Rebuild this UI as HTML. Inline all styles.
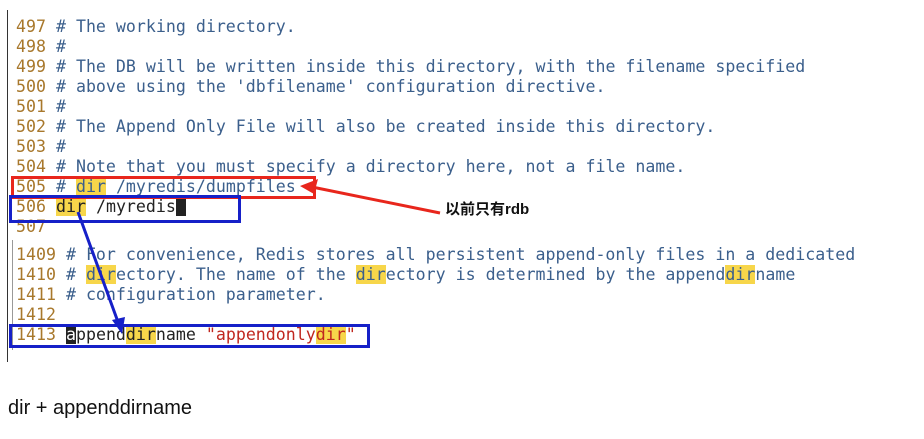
<!DOCTYPE html>
<html><head><meta charset="utf-8"><style>
body{margin:0;width:924px;height:439px;background:#fff;position:relative;overflow:hidden}
.l{position:absolute;left:16px;font-family:"DejaVu Sans Mono","Liberation Mono",monospace;font-size:16.6px;line-height:20px;white-space:pre;color:#3b5f8c}
.n{color:#a8782c}
.k{color:#222}
.s{color:#c0271f}
.h{background:#f7d64a}
.cur{background:#222;color:#fff}
.box{position:absolute;border:3px solid}
</style></head><body>
<div style="position:absolute;left:7px;top:10px;width:1px;height:352px;background:#333"></div>
<div style="position:absolute;left:12px;top:240px;width:1px;height:110px;background:#999"></div>
<div class="l" style="top:17px"><span class="n">497</span> # The working directory.</div>
<div class="l" style="top:37px"><span class="n">498</span> #</div>
<div class="l" style="top:57px"><span class="n">499</span> # The DB will be written inside this directory, with the filename specified</div>
<div class="l" style="top:77px"><span class="n">500</span> # above using the 'dbfilename' configuration directive.</div>
<div class="l" style="top:97px"><span class="n">501</span> #</div>
<div class="l" style="top:117px"><span class="n">502</span> # The Append Only File will also be created inside this directory.</div>
<div class="l" style="top:137px"><span class="n">503</span> #</div>
<div class="l" style="top:157px"><span class="n">504</span> # Note that you must specify a directory here, not a file name.</div>
<div class="l" style="top:177px"><span class="n">505</span> # <span class="h">dir</span> /myredis/dumpfiles</div>
<div class="l k" style="top:197px"><span class="n">506</span> <span class="h">dir</span> /myredis<span class="cur"> </span></div>
<div class="l" style="top:217px"><span class="n">507</span></div>
<div class="l" style="top:245px"><span class="n">1409</span> # For convenience, Redis stores all persistent append-only files in a dedicated</div>
<div class="l" style="top:265px"><span class="n">1410</span> # <span class="h">dir</span>ectory. The name of the <span class="h">dir</span>ectory is determined by the append<span class="h">dir</span>name</div>
<div class="l" style="top:285px"><span class="n">1411</span> # configuration parameter.</div>
<div class="l" style="top:305px"><span class="n">1412</span></div>
<div class="l k" style="top:325px"><span class="n">1413</span> <span class="cur">a</span>ppend<span class="h">dir</span>name <span class="s">"appendonly<span class="h">dir</span>"</span></div>
<div class="box" style="left:11px;top:176px;width:299px;height:17px;border-color:#e8261c"></div>
<div class="box" style="left:9px;top:195px;width:226px;height:22px;border-color:#1620c8"></div>
<div class="box" style="left:9px;top:324px;width:355px;height:18px;border-color:#1620c8"></div>
<svg style="position:absolute;left:0;top:0" width="924" height="439">
<line x1="440" y1="213" x2="312" y2="187" stroke="#e8261c" stroke-width="3"/>
<polygon points="300,186 318,179 314,194" fill="#e8261c"/>
<line x1="78" y1="212" x2="118" y2="322" stroke="#1620c8" stroke-width="3"/>
<polygon points="122,334 112,320 125,317" fill="#1620c8"/>
</svg>
<div style="position:absolute;left:445px;top:198px;font-family:'Liberation Sans','Noto Sans CJK SC',sans-serif;font-weight:bold;font-size:15px;color:#111">以前只有rdb</div>
<div style="position:absolute;left:8px;top:397px;font-family:'Liberation Sans',sans-serif;font-size:20px;color:#111">dir + appenddirname</div>
</body></html>
